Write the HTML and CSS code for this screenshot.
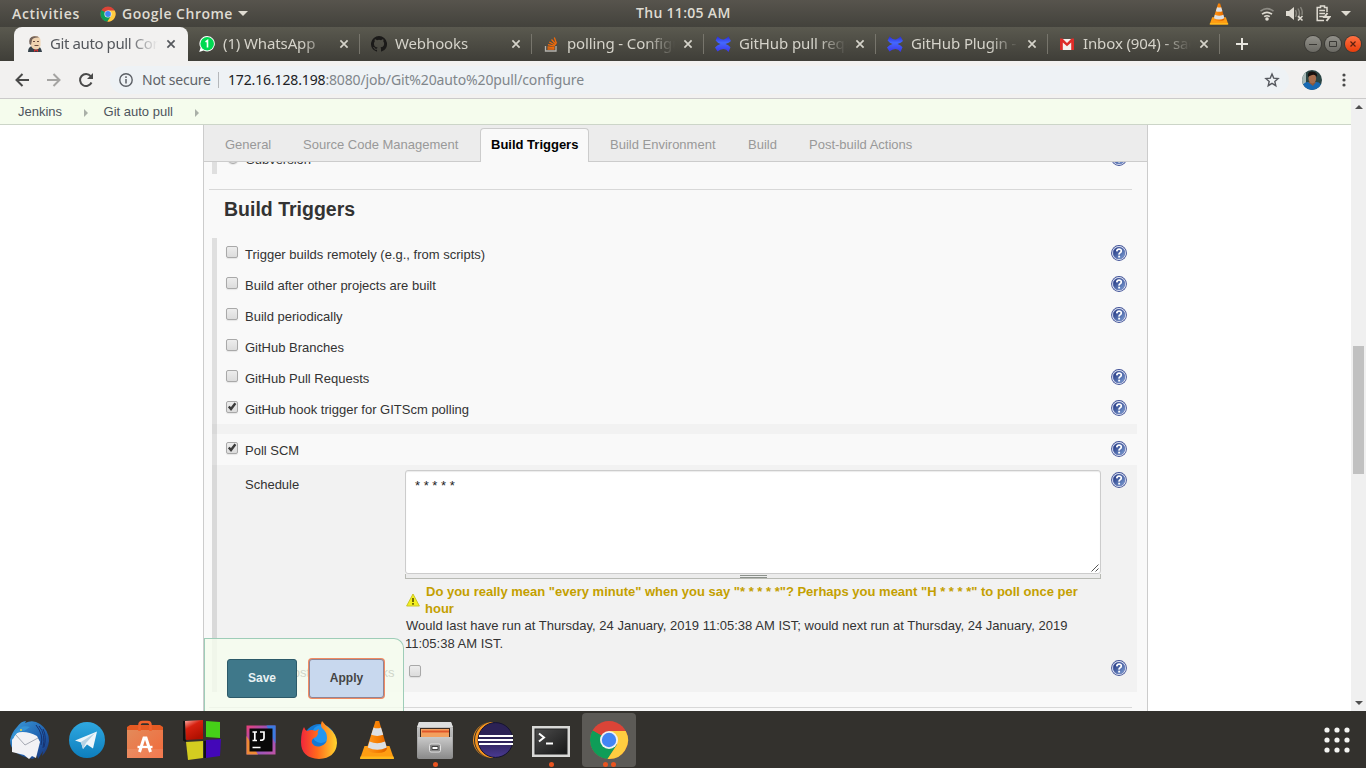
FILE: index.html
```html
<!DOCTYPE html>
<html lang="en">
<head>
<meta charset="utf-8">
<title>Git auto pull Config [Jenkins]</title>
<link rel="stylesheet" href="styles.css">
</head>
<body>
<svg class="defs" width="0" height="0">
  <defs>
    <linearGradient id="gHelp" x1="0" y1="0" x2="1" y2="1"><stop offset="0" stop-color="#1d2f7c"/><stop offset="1" stop-color="#7d9fd4"/></linearGradient>
    <linearGradient id="gCone" x1="0" x2="1"><stop offset="0" stop-color="#ff9a1e"/><stop offset=".6" stop-color="#f57c00"/><stop offset="1" stop-color="#d95f00"/></linearGradient>
    <linearGradient id="gX" x1="0" y1="0" x2="0" y2="1"><stop offset="0" stop-color="#2a2bd8"/><stop offset=".4" stop-color="#4468ff"/><stop offset="1" stop-color="#3a35e8"/></linearGradient>
    <linearGradient id="gBird" x1="0" y1="0" x2="1" y2="1"><stop offset="0" stop-color="#3d9fdc"/><stop offset=".6" stop-color="#1f5fae"/><stop offset="1" stop-color="#1b3276"/></linearGradient>
    <linearGradient id="gTele" x1="0" y1="0" x2="0" y2="1"><stop offset="0" stop-color="#2fa8e0"/><stop offset="1" stop-color="#0d7ebd"/></linearGradient>
    <linearGradient id="gBag" x1="0" y1="0" x2="1" y2="1"><stop offset="0" stop-color="#e28c5c"/><stop offset="1" stop-color="#f2693a"/></linearGradient>
    <linearGradient id="gIj" x1="0" y1="0" x2="1" y2="1"><stop offset="0" stop-color="#ee3f78"/><stop offset=".5" stop-color="#8058c8"/><stop offset="1" stop-color="#c453a4"/></linearGradient>
    <linearGradient id="gFox" x1="0" y1="0" x2="1" y2="0"><stop offset="0" stop-color="#f2263c"/><stop offset=".45" stop-color="#ff6a1c"/><stop offset="1" stop-color="#ffd62e"/></linearGradient>
    <linearGradient id="gCab" x1="0" y1="0" x2="0" y2="1"><stop offset="0" stop-color="#c9c9c9"/><stop offset="1" stop-color="#8c8c8c"/></linearGradient>
    <linearGradient id="gTerm" x1="0" y1="0" x2="1" y2="1"><stop offset="0" stop-color="#4b4b4b"/><stop offset="1" stop-color="#181818"/></linearGradient>
    <linearGradient id="gRed" x1="0" y1="0" x2=".5" y2="1"><stop offset="0" stop-color="#ffb0a8"/><stop offset=".4" stop-color="#d6200f"/><stop offset="1" stop-color="#b01000"/></linearGradient>
    <linearGradient id="gEcl" x1="0" y1="0" x2="0" y2="1"><stop offset="0" stop-color="#2c2255"/><stop offset=".5" stop-color="#2c2255"/><stop offset="1" stop-color="#4a3a93"/></linearGradient>
  </defs>
  <symbol id="chrome" viewBox="0 0 40 40">
    <circle cx="20" cy="20" r="19" fill="#db4437"/>
    <path d="M20 20 3.500 10.500A19 19 0 0 0 18.500 39L28.200 24.800Z" fill="#0f9d58"/>
    <path d="M20 11H36.700A19 19 0 0 1 18.500 39L28 24.500Z" fill="#ffcd40"/>
    <path d="M20 20 3.500 10.500 12 25Z" fill="#0f9d58"/>
    <circle cx="20" cy="20" r="9" fill="#f1f1f1"/><circle cx="20" cy="20" r="7.200" fill="#4285f4"/>
  </symbol>
  <symbol id="cone" viewBox="0 0 36 40">
    <path d="M5.500 26h25l4 11.500q.3 1.500-1.500 1.500H3q-1.800 0-1.500-1.500Z" fill="#ff9d12"/>
    <path d="M1.500 36.500h33L35 39H1Z" fill="#ffb81c"/>
    <path d="M16.500 1h3.600L28 28q0 5-10 5T8 28Z" fill="url(#gCone)"/>
    <path d="M14.500 7.500q3.700 1.700 7.500 0l2.200 7.300q-6 2.300-12 0ZM10.500 21.500q7.600 3.500 15.500 0l1.800 6q-9.500 4.700-19 0Z" fill="#dce0e4"/>
  </symbol>
  <symbol id="help" viewBox="0 0 16 16">
    <circle cx="8" cy="8" r="7.900" fill="#405197"/><circle cx="8" cy="8" r="7" fill="#f2f5fc"/><circle cx="8" cy="8" r="6.300" fill="#7385bd"/><circle cx="8" cy="8" r="5.700" fill="url(#gHelp)"/>
    <path d="M5.800 6.400Q5.900 4.200 8.100 4.200T10.300 6Q10.300 7.100 9.100 7.700T8.100 9.600" fill="none" stroke="#fff" stroke-width="1.700"/><path d="M7.200 10.700h1.900v1.800H7.200Z" fill="#fff"/>
  </symbol>
  <symbol id="x" viewBox="0 0 10 10"><path d="m1.400 1.400 7.200 7.200m0-7.200L1.400 8.600" stroke="currentColor" stroke-width="1.700" fill="none"/></symbol>
  <symbol id="confl" viewBox="0 0 16 16"><path d="M2.500.5q4 4 7 2.800Q12 2.300 13.500.5L16 5q-2 2.200-5.500 3 3 .8 5 3.200L13.500 16q-2-2.800-5-3-3.500 0-6 2.500L0 11.500Q2.500 8.700 5.500 8 2.500 7 .6 4.500Z" fill="url(#gX)"/></symbol>
</svg>

<header class="topbar">
  <span class="activities">Activities</span>
  <svg class="i16"><use href="#chrome"/></svg>
  <span class="appname">Google Chrome</span>
  <i class="caret"></i>
  <span class="clock">Thu 11:05 AM</span>
  <div class="tray">
    <svg width="20" height="22"><use href="#cone"/></svg>
    <svg width="16" height="14" viewBox="0 0 16 14" fill="none" stroke-width="1.600"><path d="M1.500 4.200Q8-1 14.500 4.200" stroke="#8c8a83"/><path d="M3 7.200q5-3.600 10 0M5.200 9.700q2.800-2 5.600 0" stroke="#dfdbd2"/><circle cx="8" cy="12" r="1.800" fill="#dfdbd2"/></svg>
    <svg width="18" height="16" viewBox="0 0 18 16"><path d="M0 5h3l5-4v13l-5-4H0Z" fill="#dfdbd2"/><path d="M9.500 4q2 3.500 0 7M12 2.500q3 5 0 10M14.500 1q2.500 4 1.500 8" fill="none" stroke="#85837b" stroke-width="1.400"/><path d="m12 10 4.500 4.500m0-4.500L12 14.500" stroke="#dfdbd2" stroke-width="1.600"/></svg>
    <svg width="15" height="17" viewBox="0 0 15 17" fill="none" stroke="#dfdbd2" stroke-width="1.500"><path d="M11 7V2.500H8.500V1h-4v1.500H1.200v13H8M3.300 5.500H9M3.300 8.500H9M3.300 11.500H8"/><path d="m11.500 8-3 4h5l-3 4" stroke-width="2"/></svg>
    <i class="caret"></i>
  </div>
</header>

<nav class="tabs">
  <div class="tab current">
    <svg class="i16" viewBox="0 0 16 16"><path d="M1 16q0-5 4-6h6q3 1 4 6Z" fill="#35414a"/><path d="M3.500 4q0-4 5-4T13.500 5v4.500q-1 4-4.500 4T3.500 9Z" fill="#efd3b0"/><path d="M2.500 8Q1 1 7 .2 11 0 12 1.500 6 1 5 4L4 9Z" fill="#73625a"/><path d="M6 5.500h2m2 0h2M7.500 9.500h4" stroke="#6b4d42"/><path d="m7 13 4 3v-3l-4 3Z" fill="#d82b2b"/></svg>
    <span class="ttl">Git auto pull Config</span><svg class="cls"><use href="#x"/></svg>
  </div>
  <div class="tab">
    <svg class="i16" viewBox="0 0 16 16"><path d="M8.300 0A7.700 7.700 0 1 1 4.700 14.600L.2 16l1.400-4.300A7.700 7.700 0 0 1 8.300 0Z" fill="#fff"/><circle cx="8.200" cy="7.800" r="6.800" fill="#00d951"/><path d="m6.500 5.800 2-1.300v7" stroke="#fff" stroke-width="1.600" fill="none"/></svg>
    <span class="ttl">(1) WhatsApp</span><svg class="cls"><use href="#x"/></svg>
  </div>
  <div class="tab">
    <svg class="i16" viewBox="0 0 16 16"><path fill="#1b1a19" d="M8 0a8 8 0 0 0-2.530 15.590c.4.070.55-.17.550-.38v-1.490c-2.010.370-2.530-.49-2.690-.94-.09-.23-.48-.94-.82-1.130-.28-.15-.68-.52-.01-.53.63-.01 1.080.58 1.230.82.720 1.210 1.870.87 2.330.66.070-.52.280-.87.510-1.070-1.780-.2-3.640-.89-3.640-3.950 0-.87.310-1.590.82-2.150-.08-.2-.36-1.020.08-2.120 0 0 .67-.21 2.200.82a7.600 7.600 0 0 1 4 0c1.530-1.040 2.200-.82 2.200-.82.440 1.100.160 1.920.080 2.120.51.560.82 1.270.82 2.150 0 3.070-1.870 3.750-3.650 3.950.29.250.54.730.54 1.480v2.200c0 .21.150.46.550.38A8 8 0 0 0 8 0Z"/></svg>
    <span class="ttl">Webhooks</span><svg class="cls"><use href="#x"/></svg>
  </div>
  <div class="tab">
    <svg class="i16" viewBox="0 0 16 16" fill="none"><path d="M2.500 10v5h10.500v-5" stroke="#b5b3ad" stroke-width="1.300"/><path d="M4.500 13h7M4.500 11l7 .6M5 8.600l6.700 1.600M6.300 6l5.900 3.200M8.500 3.500l4.500 5M11.300 1.500l2.200 6" stroke="#f26a0a" stroke-width="1.300"/></svg>
    <span class="ttl">polling - Configuring</span><svg class="cls"><use href="#x"/></svg>
  </div>
  <div class="tab"><svg class="i16"><use href="#confl"/></svg><span class="ttl">GitHub pull request</span><svg class="cls"><use href="#x"/></svg></div>
  <div class="tab"><svg class="i16"><use href="#confl"/></svg><span class="ttl">GitHub Plugin - Jenkins</span><svg class="cls"><use href="#x"/></svg></div>
  <div class="tab">
    <svg class="i16" viewBox="0 0 16 16"><path d="M2 3h12v11H2Z" fill="#f3f1ee"/><path d="M1 2.500h2.500L8 7l4.500-4.500H15V14h-2.800V6.500L8 10.300 3.800 6.500V14H1Z" fill="#dd2c28"/></svg>
    <span class="ttl">Inbox (904) - sagar</span><svg class="cls"><use href="#x"/></svg>
  </div>
  <svg class="plus" width="12" height="12"><path d="M6 0v12M0 6h12" stroke="#e8e6df" stroke-width="2"/></svg>
  <div class="winbtns">
    <b><svg width="8" height="8"><path d="M0 4.500h8" stroke="#3a3935"/></svg></b>
    <b><svg width="8" height="8"><path d="M.5 1.500h7v5h-7Z" fill="none" stroke="#3a3935"/></svg></b>
    <b class="close"><svg width="8" height="8"><path d="m1.500 1.500 5 5m0-5-5 5" stroke="#5a2010" stroke-width="1.200"/></svg></b>
  </div>
</nav>

<div class="toolbar">
  <svg class="nav" viewBox="0 0 16 16" fill="none" stroke="#4a4a4a" stroke-width="2"><path d="M15 8H2.500M8.500 2 2.500 8l6 6"/></svg>
  <svg class="nav" viewBox="0 0 16 16" fill="none" stroke="#a5a4a2" stroke-width="2"><path d="M1 8h12.500M7.500 2l6 6-6 6"/></svg>
  <svg class="nav" viewBox="0 0 16 16"><path d="M13.500 10.500a6 6 0 1 1-.8-6.300" fill="none" stroke="#4a4a4a" stroke-width="2"/><path d="M15 1v6H9Z" fill="#4a4a4a"/></svg>
  <div class="omni">
    <svg width="14" height="14" viewBox="0 0 14 14"><circle cx="7" cy="7" r="6.200" fill="none" stroke="#5c6066" stroke-width="1.400"/><path d="M7 6v4.500M7 3.300v1.600" stroke="#5c6066" stroke-width="1.500"/></svg>
    <span class="insecure">Not secure</span><i class="bar"></i>
    <span class="url"><em>172.16.128.198</em>:8080/job/Git%20auto%20pull/configure</span>
    <svg class="star" width="16" height="16" viewBox="0 0 16 16"><path d="m8 2 1.700 4.100 4.400.4-3.300 2.900 1 4.300L8 11.400l-3.800 2.300 1-4.300-3.300-2.900 4.400-.4Z" fill="none" stroke="#55585e" stroke-width="1.400"/></svg>
  </div>
  <svg class="avatar" viewBox="0 0 20 20"><defs><clipPath id="av"><circle cx="10" cy="10" r="10"/></clipPath></defs><g clip-path="url(#av)"><path d="M0 0h20v20H0Z" fill="#2b4544"/><path d="M0 2h4v12H0Z" fill="#a8b9b7"/><path d="M0 20q0-8 6-8h7q7-1 7 8Z" fill="#1769b4"/><path d="M6 12h8l-3 4Z" fill="#8c5a3e"/><ellipse cx="10.300" cy="8.500" rx="3.800" ry="5" fill="#a66d4c"/><path d="M6 7Q5 1 10.500 1.500T15 7Q13 4 10 5T6 7Z" fill="#17120f"/></g></svg>
  <svg width="4" height="14"><g fill="#4a4a4a"><circle cx="2" cy="2" r="1.600"/><circle cx="2" cy="7" r="1.600"/><circle cx="2" cy="12" r="1.600"/></g></svg>
</div>

<div class="viewport">
  <div class="page">
    <div class="crumbs"><span>Jenkins</span><i></i><span>Git auto pull</span><i></i></div>
    <main class="panel">
      <div class="cfgtabs">
        <span class="c1">General</span><span class="c2">Source Code Management</span><span class="on">Build Triggers</span><span class="c4">Build Environment</span><span class="c5">Build</span><span class="c6">Post-build Actions</span>
      </div>
      <div class="scroll">
        <div class="row first"><i class="radio"></i><span>Subversion</span><svg class="help"><use href="#help"/></svg></div>
        <h2>Build Triggers</h2>
        <div class="row"><i class="cb"></i><span>Trigger builds remotely (e.g., from scripts)</span><svg class="help"><use href="#help"/></svg></div>
        <div class="row"><i class="cb"></i><span>Build after other projects are built</span><svg class="help"><use href="#help"/></svg></div>
        <div class="row"><i class="cb"></i><span>Build periodically</span><svg class="help"><use href="#help"/></svg></div>
        <div class="row"><i class="cb"></i><span>GitHub Branches</span></div>
        <div class="row"><i class="cb"></i><span>GitHub Pull Requests</span><svg class="help"><use href="#help"/></svg></div>
        <div class="row"><i class="cb"><svg viewBox="0 0 12 12"><path d="m2.800 6.500 2.200 2.500 4.400-5.700" fill="none" stroke="#3c3c3c" stroke-width="2.400"/></svg></i><span>GitHub hook trigger for GITScm polling</span><svg class="help"><use href="#help"/></svg></div>
        <div class="strip"></div>
        <div class="row"><i class="cb"><svg viewBox="0 0 12 12"><path d="m2.800 6.500 2.200 2.500 4.400-5.700" fill="none" stroke="#3c3c3c" stroke-width="2.400"/></svg></i><span>Poll SCM</span><svg class="help"><use href="#help"/></svg></div>
        <div class="nested">
          <div class="field">
            <span class="label">Schedule</span>
            <div class="control">
              <div class="area">* * * * *<svg width="8" height="8"><path d="M.5 7.500l7-7M4.500 7.500l3-3" stroke="#555"/></svg></div>
              <div class="grip"><i></i></div>
              <div class="warn"><svg width="14" height="14" viewBox="0 0 14 14"><path d="M7 1 13.400 13H.6Z" fill="#f4ef1d" stroke="#c9c52c" stroke-linejoin="round"/><path d="M7 5v4m0 1v1.700" stroke="#554f00" stroke-width="1.600"/></svg><p><span>Do you really mean "every minute" when you say "* * * * *"? Perhaps you meant "H * * * *" to poll once per</span><br>hour</p></div>
              <p class="info"><span>Would last have run at Thursday, 24 January, 2019 11:05:38 AM IST; would next run at Thursday, 24 January, 2019</span><br>11:05:38 AM IST.</p>
            </div>
            <svg class="help"><use href="#help"/></svg>
          </div>
          <div class="field hooks"><span class="label">Ignore post-commit hooks</span><div class="control"><i class="cb"></i></div><svg class="help"><use href="#help"/></svg></div>
        </div>
        <hr>
        <div class="actions"><button class="save">Save</button><button class="apply">Apply</button></div>
      </div>
    </main>
  </div>
  <div class="sbar"><i class="up"></i><i class="thumb"></i><i class="down"></i></div>
</div>

<footer class="dock">
  <div class="app"><svg viewBox="0 0 40 40"><path d="M8 7Q12 1 17 1l-1 2Q24-1 31 4q9 6 9 17-1 9-7 15l1-5-5 8-1-4-4 4Q1 35 1 20 3 12 8 7Z" fill="url(#gBird)"/><path d="M30 6q7 8 4 22M34 9q4 8 1 18M27 5q8 10 5 20" stroke="#17326f" fill="none"/><path d="m3 20 4-7q10-3 21 3l3 6-4 16-4-2-3 3-5-4-12-3Z" fill="#f2f2f5"/><path d="m6 14 10 11 13-7" fill="none" stroke="#a5a9b3"/><path d="M6 12q7-8 15-5l-6 4q-7-1-11 8Q2 15 6 12Z" fill="#3694d5"/><circle cx="12" cy="10" r="1" fill="#f5d83c"/></svg></div>
  <div class="app"><svg viewBox="0 0 40 40"><circle cx="20" cy="20" r="18" fill="url(#gTele)"/><path d="M8 20.500 30 11.500l-4 17-6-4-4 4.500-2-6.500Z" fill="#eef6fb"/><path d="m14 22 14-9-9 10-3 6Z" fill="#b5d2e4"/></svg></div>
  <div class="app"><svg viewBox="0 0 40 40"><path d="M2 7h36v31H2Z" fill="url(#gBag)"/><path d="m2 7 3-2h30l3 2v3H2Z" fill="#e55a23"/><path d="M14.500 11V5q0-3 3-3h5q3 0 3 3v6" fill="none" stroke="#f0622d" stroke-width="2.600"/><path d="M2 29h36v9H2Z" fill="#fff" opacity=".1"/><path d="m14.500 32 4.500-14h2l4.500 14" fill="none" stroke="#fff" stroke-width="3"/><path d="M12.500 27h15" stroke="#fff" stroke-width="2.400"/></svg></div>
  <div class="app"><svg viewBox="0 0 40 40"><path d="m2 1 18-1v19L3 20Z" fill="url(#gRed)"/><path d="m23 1 14 1v16l-14-1Z" fill="#46d018"/><path d="m3 22 17-1v17L5 40Z" fill="#d4cd20"/><path d="M23 20l15-1-1 17-14 2Z" fill="#4307b8"/><path d="M1 1v19l2 1M22 21v17" stroke="#111" stroke-width="2" fill="none"/></svg></div>
  <div class="app"><svg viewBox="0 0 40 40"><path d="M5.500 5.500h29v29h-29Z" fill="url(#gIj)"/><path d="M5.500 16v18.500H17Z" fill="#ef8a35"/><path d="M34.500 5.500v18l-9-18Z" fill="#3b7be0"/><path d="M8.500 8.500h23v23h-23Z" fill="#080808"/><path d="M11.500 12h4.500m-2.200 0v8M11.500 20.500H16M19 12h4v6q0 2.500-4 2.200M11.500 27.500h8" fill="none" stroke="#fff" stroke-width="1.700"/></svg></div>
  <div class="app"><svg viewBox="0 0 40 40"><circle cx="20.500" cy="20" r="16" fill="#1478d4"/><circle cx="22" cy="14" r="9" fill="#2196f0"/><path d="M5 7q1 3 3 4 5-2 8 0l4-2q-2 3-1 5-1 3-4 4-3 2-2 5 3 5 9 3 6-2 6-8 0-6-5-10-2-3 0-7 3 4 6 6 9 7 9 16-1 15-18 16Q2 38 2 22 2 12 5 7Z" fill="url(#gFox)"/></svg></div>
  <div class="app"><svg viewBox="-2 0 40 40"><use href="#cone" width="36" height="40"/></svg></div>
  <div class="app one"><svg viewBox="0 0 40 40"><path d="M4 2h32l2 6v29q0 2-2 2H4q-2 0-2-2V8Z" fill="url(#gCab)"/><path d="M4 2h32l2 5H2Z" fill="#dedede"/><path d="M5 8h30v9H5Z" fill="#3c2a20"/><path d="M6 9h28v8H6Z" fill="#f3a05e"/><path d="M7 11.500h27" stroke="#e0562a" stroke-width="2" fill="none"/><path d="M3 17h34v21H3Z" fill="url(#gCab)"/><rect x="14.500" y="24" width="11" height="8" rx="1.500" fill="#888" stroke="#e2e2e2"/><path d="M17 26.500h6v3h-6Z" fill="#fff" stroke="#444"/></svg></div>
  <div class="app"><svg viewBox="0 0 40 40"><path d="M19 2a18 18 0 0 0 0 36A19 18 0 0 1 19 2Z" fill="#f7941e"/><path d="M20 2a18 18 0 0 0 0 36Z" fill="#f7941e"/><circle cx="22.500" cy="20" r="17.400" fill="url(#gEcl)" stroke="#161330"/><path d="M6 16h34M5 20h35M6 24h34" stroke="#fff" stroke-width="2"/></svg></div>
  <div class="app one"><svg viewBox="0 0 40 40"><path d="M1 6h38v31H1Z" fill="#d8d8d6"/><path d="M3.500 8.500h33v26h-33Z" fill="#222"/><path d="M4.500 9.500h31v24h-31Z" fill="url(#gTerm)"/><path d="m8 13.500 5 4-5 4M15 23.500h7" fill="none" stroke="#fff" stroke-width="2"/></svg></div>
  <div class="app active two"><svg viewBox="0 0 40 40"><use href="#chrome" width="40" height="40"/></svg></div>
  <svg class="grid" width="26" height="26"><g fill="#f4f4f2"><circle cx="3" cy="3" r="2.600"/><circle cx="13" cy="3" r="2.600"/><circle cx="23" cy="3" r="2.600"/><circle cx="3" cy="13" r="2.600"/><circle cx="13" cy="13" r="2.600"/><circle cx="23" cy="13" r="2.600"/><circle cx="3" cy="23" r="2.600"/><circle cx="13" cy="23" r="2.600"/><circle cx="23" cy="23" r="2.600"/></g></svg>
</footer>
</body>
</html>
```
FILE: styles.css
```css
* { box-sizing: border-box; }
body { margin: 0; width: 1366px; height: 768px; overflow: hidden; display: flex; flex-direction: column; font: 13px/17px "Liberation Sans", Arial, sans-serif; color: #333; background: #fff; }
svg { flex: none; display: block; }
.defs { position: absolute; }
.i16 { width: 16px; height: 16px; }
p { margin: 0; }

/* desktop top bar */
.topbar { flex: none; height: 27px; display: flex; align-items: center; padding: 0 15px 0 12px; background: linear-gradient(#57544d, #43423c); color: #dfdbd2; font: 600 14px/27px "Open Sans", "Noto Sans", sans-serif; }
.activities { width: 88px; letter-spacing: .65px; }
.appname { margin-left: 6px; width: 111px; white-space: nowrap; letter-spacing: .5px; }
.caret { border: 5px solid transparent; border-top-color: #dfdbd2; border-bottom: 0; margin-left: 5px; }
.clock { margin-left: 388px; width: 97px; white-space: nowrap; letter-spacing: .3px; line-height: 25px; margin-top: -2px; }
.tray { display: flex; align-items: center; margin-left: auto; }
.tray svg + svg { margin-left: 11px; }
.tray svg:nth-child(2) { margin-left: 30px; }
.tray svg:nth-child(4) { margin-left: 12px; }
.tray .caret { margin-left: 10px; }

/* browser tab strip */
.tabs { flex: none; height: 34px; display: flex; align-items: center; padding-left: 14px; background: linear-gradient(#5a594f, #3f3e38); color: #d5d3ca; font: 15px/32px "Noto Sans", sans-serif; }
.tab { width: 172px; height: 34px; display: flex; align-items: center; padding-left: 11px; background: linear-gradient(#77756c, #77756c) right 7px / 1px 20px no-repeat; }
.tab.current { width: 174px; padding-left: 13px; border-radius: 8px 8px 0 0; background: #f2f1f0; color: #54575c; }
.ttl { width: 109px; height: 34px; margin: 0 8px; overflow: hidden; white-space: nowrap; letter-spacing: -.12px; -webkit-mask-image: linear-gradient(90deg, #000 72%, transparent 99%); mask-image: linear-gradient(90deg, #000 72%, transparent 99%); }
.current .ttl { margin-left: 7px; letter-spacing: -.4px; }
.cls { width: 10px; height: 10px; margin-left: -1px; }
.plus { margin-left: 16px; }
.winbtns { display: flex; gap: 4px; margin-left: 57px; }
.winbtns b { width: 16px; height: 16px; border-radius: 50%; display: grid; place-items: center; background: linear-gradient(#92918a, #6b6a64); box-shadow: 0 0 0 1px #3b3a36; }
.winbtns .close { background: linear-gradient(#ff7142, #e83d0b); }

/* address bar */
.toolbar { flex: none; height: 38px; display: flex; align-items: center; padding: 0 20px 0 14px; background: #f2f1f0; border-bottom: 1px solid #cbcaca; font: 14px/28px "Noto Sans", sans-serif; }
.nav { width: 16px; height: 16px; margin-right: 16px; }
.omni { display: flex; align-items: center; width: 1182px; height: 28px; border-radius: 14px; background: #eef2f5; padding: 0 9px 0 9px; margin-right: 13px; }
.insecure { margin-left: 9px; width: 71px; color: #5f6368; white-space: nowrap; letter-spacing: -.25px; }
.bar { width: 1px; height: 16px; margin: 0 9px 0 5px; background: #b5b8bb; }
.url { color: #80868b; white-space: nowrap; letter-spacing: -.14px; }
.url em { font-style: normal; color: #202124; }
.star { margin-left: auto; }
.avatar { width: 20px; height: 20px; margin-right: 20px; }

/* page */
.viewport { flex: none; height: 612px; display: flex; }
.page { width: 1351px; display: flex; flex-direction: column; }
.crumbs { height: 26px; display: flex; align-items: center; padding-left: 18px; background: #f5fced; border-bottom: 1px solid #ccd5c8; color: #4d545d; }
.crumbs i { border: 4px solid transparent; border-left-color: #aab0a8; border-right: 0; margin: 2px 15.500px 0 22px; }
.panel { width: 945px; height: 586px; margin-left: 203px; border: solid #ccc; border-width: 0 1px; background: #f9f9f9; display: flex; flex-direction: column; }
.cfgtabs { flex: none; height: 37px; background: #ececec; border-bottom: 1px solid #ccc; display: flex; align-items: flex-end; padding-left: 21px; color: #999; white-space: nowrap; }
.cfgtabs span { height: 34px; line-height: 34px; margin-bottom: -1px; }
.cfgtabs .c1 { width: 78px; }
.cfgtabs .c2 { width: 177px; }
.cfgtabs .on { width: 109px; margin-right: 21px; padding-left: 10px; line-height: 32px; border: 1px solid #ccc; border-bottom: 0; border-radius: 4px 4px 0 0; background: #f9f9f9; color: #000; font-weight: bold; }
.cfgtabs .c4 { width: 138px; }
.cfgtabs .c5 { width: 61px; }
.scroll { position: relative; height: 549px; overflow: hidden; padding: 0 10px 0 8px; }
.row { height: 31px; display: flex; align-items: flex-start; border-left: 5px solid #dfdfdf; padding: 7px 10px 0 9px; }
.row.first { margin-top: -19px; }
.row span { margin: 1px 0 0 7px; }
.row.first span { margin-left: 8px; }
.help { width: 16px; height: 16px; margin-left: auto; }
.cb, .radio { display: block; flex: none; width: 12px; height: 12px; margin-top: 1px; border: 1px solid #a9a9a9; border-radius: 2px; background: linear-gradient(#ededed, #dcdcdc); box-shadow: 0 1px 1px rgba(0,0,0,.08); }
.cb svg { width: 12px; height: 12px; margin: -2px 0 0 -1px; overflow: visible; }
.radio { border-radius: 50%; margin: 2px -1px 0 1px; }
h2 { margin: 15px 5px 0 -3px; height: 49px; padding: 7px 0 0 15px; border-top: 1px solid #d8d8d8; font: bold 19.500px/24px "Liberation Sans", Arial, sans-serif; }
.strip { height: 10px; border-left: 5px solid #d9d9d9; background: #f2f2f2; }
.nested { height: 227px; border-left: 5px solid #d9d9d9; background: #f2f2f2; padding: 5px 10px 0 28px; }
.field { display: flex; }
.field .help { margin-top: 2px; }
.label { width: 160px; padding-top: 6px; white-space: nowrap; }
.control { width: 696px; }
.area { height: 104px; padding: 6px 9px; border: 1px solid #ccc; border-radius: 3px; background: #fff; box-shadow: inset 0 1px 1px rgba(0,0,0,.08); color: #222; display: flex; }
.area svg { margin: 87px -8px 0 auto; }
.grip { height: 5px; border: 1px solid #b8bab4; border-top: 0; background: #ececec; display: flex; justify-content: center; }
.grip i { width: 27px; height: 3px; border: solid #8b918b; border-width: 1px 0; margin-top: 1px; }
.warn { display: flex; gap: 5px; padding-left: 1px; margin-top: 4px; color: #c4a000; font-weight: bold; white-space: nowrap; }
.warn svg { margin-top: 10px; }
.warn span { margin-left: 1px; }
.info { line-height: 18px; white-space: nowrap; }
.info span { margin-left: 1px; word-spacing: .07px; }
.hooks { margin-top: 5px; }
.hooks .cb { margin: 7px 0 0 4px; }
hr { margin: 15px 5px 0 -3px; border: 0; border-top: 1px solid #d8d8d8; }
.actions { position: absolute; left: 0; bottom: 0; width: 200px; height: 73px; padding: 20px 0 0 22px; display: flex; align-items: flex-start; gap: 12px; border: 1px solid #9ecdb8; border-bottom: 0; border-radius: 0 10px 0 0; background: rgba(245,252,237,.8); }
button { height: 39px; padding: 0 0 2px; border-radius: 3px; font: bold 12px "Liberation Sans", Arial, sans-serif; }
.save { width: 70px; border: 1px solid #2c5a69; background: #3f788a; color: #e8f1f3; }
.apply { width: 75px; border: 1px solid #8f8494; background: #c8d8ee; color: #444; box-shadow: 0 0 0 1px #f08a62; }
.sbar { width: 15px; background: #f0f0f0; display: flex; flex-direction: column; align-items: center; padding: 6px 0; }
.up, .down { border: 4px solid transparent; }
.up { border-bottom-color: #505050; border-top: 0; }
.down { border-top-color: #505050; border-bottom: 0; margin-top: auto; }
.thumb { width: 11px; height: 128px; margin-top: 237px; background: #c1c1c1; }

/* launcher */
.dock { flex: none; height: 57px; display: flex; background: #33312d; }
.app { width: 54px; height: 54px; margin: 2px 2px 0; border-radius: 4px; display: flex; flex-direction: column; align-items: center; padding-top: 7px; }
.app svg { width: 40px; height: 40px; }
.app.active { background: #5c5a56; }
.one::after, .two::after { content: ""; width: 5px; height: 5px; margin-top: 2px; border-radius: 50%; background: #e95420; }
.two::after { margin-left: -8px; box-shadow: 8px 0 #e95420; }
.grid { margin: 16px 16px 0 auto; }
```
